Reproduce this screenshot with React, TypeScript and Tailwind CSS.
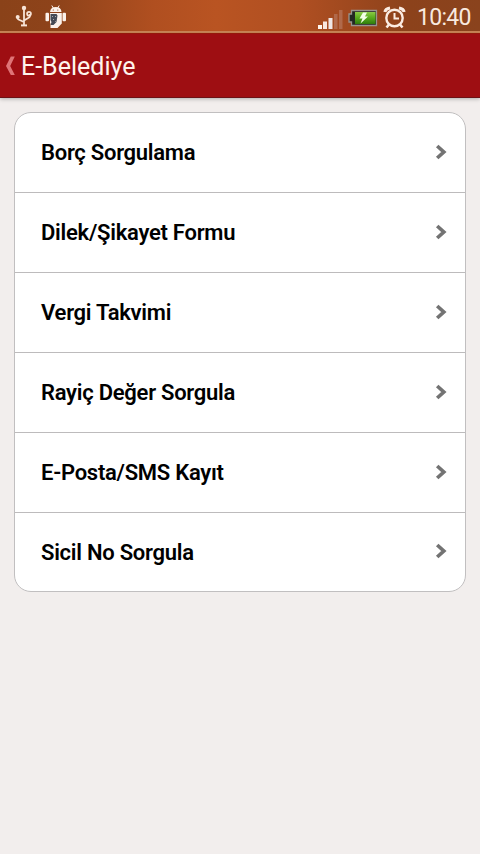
const menuItems = [
  'Borç Sorgulama',
  'Dilek/Şikayet Formu',
  'Vergi Takvimi',
  'Rayiç Değer Sorgula',
  'E-Posta/SMS Kayıt',
  'Sicil No Sorgula'
]

function App() {
  return (
    <div className="flex flex-col h-screen bg-[#f2eeed] font-['Roboto',sans-serif]">
      <StatusBar />
      <Header title="E-Belediye" />
      <main className="px-[14px] pt-[14px]">
        <ul className="bg-white border border-[#c1bfc0] rounded-[17px] divide-y divide-[#bdbbbc] overflow-hidden">
          {menuItems.map((label) => (
            <MenuRow key={label} label={label} />
          ))}
        </ul>
      </main>
    </div>
  )
}

function StatusBar() {
  return (
    <div className="h-[34px] shrink-0 border-b border-[#a01a0c] bg-[linear-gradient(90deg,#8a4219_0%,#8e431a_12%,#b04f20_32%,#b95422_45%,#b04f22_62%,#8c421b_85%,#8a431d_100%)]">
      <div className="flex h-[33px] justify-between border-b-2 border-[#c98455]">
        <div className="flex pl-[15px] pt-[5px] gap-[7px]">
          <UsbIcon />
          <AndroidIcon />
        </div>
        <div className="flex pt-[6px] pr-[9px]">
          <SignalIcon />
          <BatteryIcon />
          <AlarmIcon />
          <span className="ml-[11px] w-[54px] text-[23px] leading-6 tracking-[-0.7px] whitespace-nowrap text-[#f8e9df]">10:40</span>
        </div>
      </div>
    </div>
  )
}

function Header({ title }: { title: string }) {
  return (
    <header className="flex items-center h-16 shrink-0 bg-[#9e0e12] border-b border-[#6c1216] shadow-[0_1px_4px_rgba(0,0,0,0.28)]">
      <svg className="w-[10px] h-5 ml-[5px] shrink-0" viewBox="0 0 10 20">
        <path d="M5.8 0.5H9.8L5.2 10L9.8 19H5.8L1 10Z" fill="#df7477" />
      </svg>
      <h1 className="ml-[6px] mt-[2px] text-[25px] leading-8 text-[#fff3ec]">{title}</h1>
    </header>
  )
}

function MenuRow({ label }: { label: string }) {
  return (
    <li className="flex items-center justify-between h-20 last:h-[78px] pl-[26px] pr-[18px]">
      <span className="mt-px text-[22px] leading-8 font-semibold tracking-[-0.26px] text-black">{label}</span>
      <svg className="w-3 h-4 -mt-[2px]" viewBox="0 0 12 16">
        <path d="M2.2 2L8.8 8L2.2 14" fill="none" stroke="#737373" strokeWidth="3.7" />
      </svg>
    </li>
  )
}

function UsbIcon() {
  return (
    <svg className="w-[18px] h-[22px]" viewBox="0 0 18 22" fill="none" stroke="#f7e3d6" strokeWidth="1.8">
      <path d="M9 3V20M9 17L3.5 14.5Q2.5 14 2.5 12.5V11.5M9 15.5L14 12.5Q15 12 15 10.5V9" />
      <circle cx="9" cy="3" r="2.2" fill="#f7e3d6" stroke="none" />
      <circle cx="2.7" cy="12" r="2" fill="#f7e3d6" stroke="none" />
      <circle cx="14" cy="8.7" r="1.9" />
      <path d="M6 20.4H12" strokeWidth="2" />
    </svg>
  )
}

function AndroidIcon() {
  return (
    <svg className="w-[22px] h-[24px] ml-[5px]" viewBox="0 0 22 24">
      <g fill="#fbf1ea">
        <path d="M5 7Q5.5 2 10.8 2T16.5 7Z" />
        <path d="M6.8 0.5L8.3 3M14.2 0.5L12.7 3" stroke="#fbf1ea" />
        <rect x="0.5" y="7.8" width="3.5" height="8.4" rx="1" />
        <rect x="17.5" y="7.8" width="3.5" height="8.4" rx="1" />
        <path d="M5 8H16.8V18.5L12.5 23H5.5V18.5L5 18Z" />
      </g>
      <circle cx="8.3" cy="5" r="0.6" fill="#8e431a" />
      <circle cx="12.8" cy="5" r="0.6" fill="#8e431a" />
      <path d="M5.5 9H11.5L12.5 10.5L11.5 17L8.5 20H5.5L6.5 17L5.5 15Z" fill="#454a55" />
      <path d="M7 11L8 12M10 11L11 12M8 14L9 15M10 16L10.7 16.7" stroke="#b9b5b5" strokeWidth="0.9" />
    </svg>
  )
}

function SignalIcon() {
  return (
    <svg className="w-[26px] h-6" viewBox="0 0 26 24">
      <rect x="0" y="19" width="4" height="4" fill="#fff7ef" />
      <rect x="5" y="15.5" width="4" height="7.5" fill="#f9e8e0" />
      <rect x="10.5" y="12" width="4" height="11" fill="#efe7e6" />
      <rect x="16" y="8" width="3.5" height="15" fill="#b0694a" />
      <rect x="21" y="4" width="3.5" height="19" fill="#b0694a" />
    </svg>
  )
}

function BatteryIcon() {
  return (
    <svg className="w-[30px] h-[18px] mt-[3px] ml-[4px]" viewBox="0 0 30 18">
      <defs>
        <linearGradient id="charge" x1="0" y1="0" x2="0" y2="1">
          <stop offset="0" stopColor="#8bcb45" />
          <stop offset="0.45" stopColor="#5cad20" />
          <stop offset="1" stopColor="#2f7d0b" />
        </linearGradient>
      </defs>
      <path d="M3.5 1.5H28.5V16.5H3.5V13H1V5H3.5Z" fill="#242923" stroke="#9a9590" strokeWidth="1.3" />
      <rect x="7" y="3" width="20.5" height="12" fill="url(#charge)" />
      <path d="M15 3.5H19L17 7.5H20L12.5 14.5L14.5 9.5H11.5Z" fill="#f4ffe7" />
    </svg>
  )
}

function AlarmIcon() {
  return (
    <svg className="w-[23px] h-[23px] ml-[5px]" viewBox="0 0 23 23" fill="none" stroke="#fbece2">
      <circle cx="11.5" cy="12" r="8.2" strokeWidth="2.4" />
      <path d="M11.5 7V12.5H16" strokeWidth="2" />
      <path d="M6 18.5L3.5 21.5M17 18.5L19.5 21.5" strokeWidth="2.6" />
      <path d="M2 6Q2.3 2.8 7 2M21 6Q20.7 2.8 16 2" strokeWidth="3.2" />
    </svg>
  )
}

export default App
